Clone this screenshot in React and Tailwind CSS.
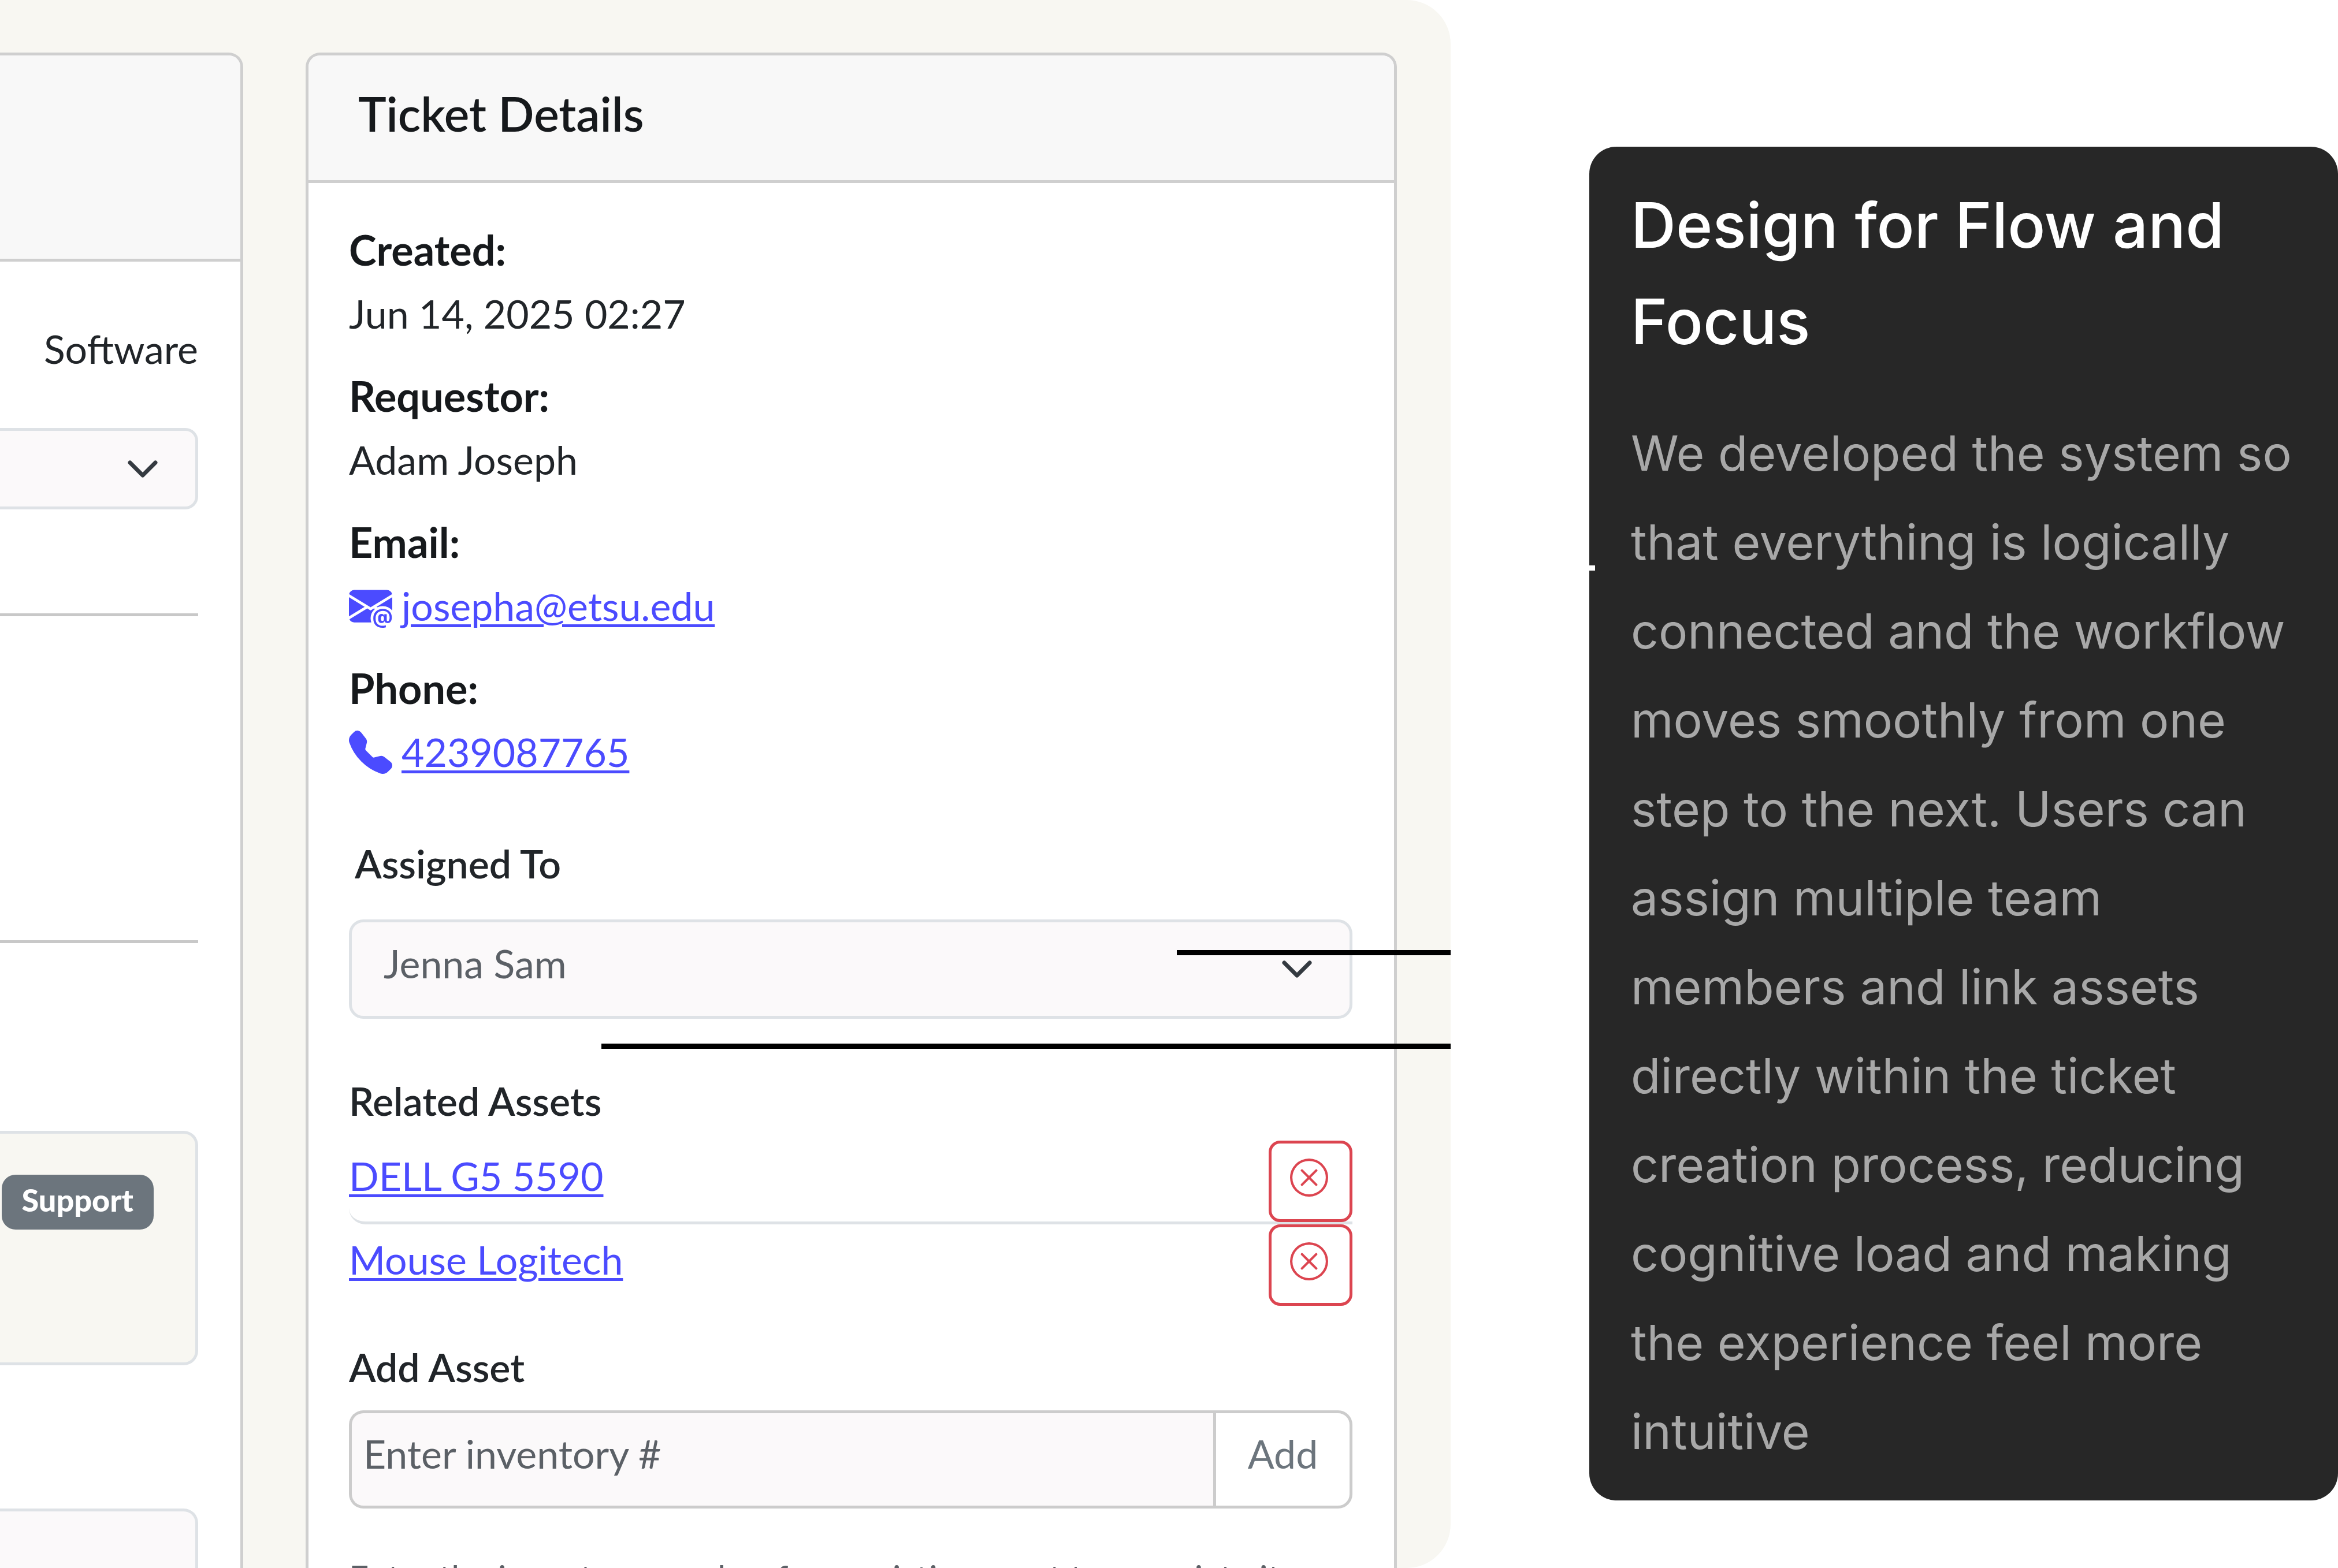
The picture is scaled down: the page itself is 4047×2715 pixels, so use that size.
import { BsEnvelopeAtFill, BsTelephoneFill, BsXCircle } from 'react-icons/bs';

const assets = ['DELL G5 5590', 'Mouse Logitech'];

function Chevron() {
  return (
    <svg
      viewBox="0 0 52 32"
      aria-hidden="true"
      className="pointer-events-none absolute right-[70px] top-1/2 h-8 w-[52px] -translate-y-1/2 fill-none stroke-[#343a40] stroke-[7]"
      strokeLinecap="round"
      strokeLinejoin="round"
    >
      <path d="M4 5 L26 27 L48 5" />
    </svg>
  );
}

function Detail({ label, children }) {
  return (
    <div className="mb-[31px]">
      <dt className="text-[72px] font-bold leading-[112px] text-[#16191c]">{label}</dt>
      <dd className="leading-[110px]">{children}</dd>
    </div>
  );
}

function IconLink({ href, icon: Icon, children }) {
  return (
    <a href={href} className="flex w-fit items-center gap-4 text-[#4b4bff]">
      <Icon className="size-[75px] shrink-0" aria-hidden="true" />
      <span className="underline decoration-[5px] underline-offset-[6px]">{children}</span>
    </a>
  );
}

function TicketCard() {
  return (
    <section className="w-[421px] shrink-0 rounded-tr-[25px] border-[5px] border-b-0 border-l-0 border-[#cfcfcf] bg-white">
      <header className="h-[357px] rounded-tr-[20px] border-b-[5px] border-[#cfcfcf] bg-[#f8f8f8]" />
      <div className="flex flex-col pr-[73px] pt-[96px]">
        <p className="text-right leading-[110px]">Software</p>
        <div className="relative mt-[82px]">
          <select
            aria-label="Category"
            defaultValue=""
            className="block h-[141px] w-full appearance-none rounded-r-[22px] border-[5px] border-l-0 border-[#dee2e6] bg-[#fbf9fa]"
          >
            <option value=""></option>
          </select>
          <Chevron />
        </div>
        <hr className="mt-[180px] border-t-[5px] border-[#c8c8c8]" />
        <hr className="mt-[561px] border-t-[5px] border-[#c8c8c8]" />
        <div className="mt-[325px] flex h-[406px] justify-end rounded-r-[25px] border-[5px] border-l-0 border-[#dee2e6] bg-[#f8f7f2] pr-[72px] pt-[71px]">
          <span className="h-[95px] rounded-[24px] bg-[#6c757d] px-[35px] text-[54px] font-black leading-[88px] text-white">
            Support
          </span>
        </div>
        <div className="mt-[248px] h-[300px] rounded-r-[25px] border-[5px] border-l-0 border-[#dee2e6] bg-[#fbf9fa]" />
      </div>
    </section>
  );
}

function DetailsCard() {
  return (
    <section className="min-w-0 flex-1 rounded-t-[25px] border-[5px] border-b-0 border-[#cfcfcf] bg-white">
      <header className="rounded-t-[20px] border-b-[5px] border-[#cfcfcf] bg-[#f8f8f8] pb-[66px] pl-[86px] pt-[50px]">
        <h2 className="text-[82px] font-semibold leading-[100px] text-[#16191c]">Ticket Details</h2>
      </header>
      <div className="pl-[70px] pr-[72px] pt-[59px]">
        <dl>
          <Detail label="Created:">Jun 14, 2025 02:27</Detail>
          <Detail label="Requestor:">Adam Joseph</Detail>
          <Detail label="Email:">
            <IconLink href="mailto:josepha@etsu.edu" icon={BsEnvelopeAtFill}>josepha@etsu.edu</IconLink>
          </Detail>
          <Detail label="Phone:">
            <IconLink href="tel:4239087765" icon={BsTelephoneFill}>4239087765</IconLink>
          </Detail>
        </dl>

        <label htmlFor="assignee" className="mt-[83px] block pl-[10px] font-semibold leading-[110px]">
          Assigned To
        </label>
        <div className="relative mt-[42px]">
          <select
            id="assignee"
            defaultValue="Jenna Sam"
            className="block h-[172px] w-full appearance-none rounded-[25px] border-[5px] border-[#dee2e6] bg-[#fbf9fa] pb-5 pl-[55px] text-[#5b6066]"
          >
            <option>Jenna Sam</option>
          </select>
          <Chevron />
        </div>

        <h3 className="mt-[87px] font-semibold leading-[110px]">Related Assets</h3>
        <ul className="mt-[14px]">
          {assets.map((name) => (
            <li
              key={name}
              className="flex h-[145px] items-start justify-between rounded-bl-[28px] border-[#dee2e6] not-last:border-b-[5px] last:h-[141px]"
            >
              <a
                href="#asset"
                className="pt-[6px] leading-[110px] text-[#4b4bff] underline decoration-[5px] underline-offset-[6px]"
              >
                {name}
              </a>
              <button
                type="button"
                aria-label={`Remove ${name}`}
                className="flex h-[141px] w-[145px] items-center justify-center rounded-[20px] border-[5px] border-[#dc4550] bg-white pb-[14px] pr-[6px] text-[#dc4550]"
              >
                <BsXCircle className="size-[66px]" />
              </button>
            </li>
          ))}
        </ul>

        <label htmlFor="inventory" className="mt-[51px] block font-semibold leading-[110px]">
          Add Asset
        </label>
        <div className="mt-[20px] flex h-[170px]">
          <input
            id="inventory"
            type="text"
            placeholder="Enter inventory #"
            className="min-w-0 flex-1 rounded-l-[25px] border-[5px] border-r-0 border-[#cccccc] bg-[#fbf9fa] pb-5 pl-5 placeholder:text-[#5b6066]"
          />
          <button
            type="button"
            className="w-[241px] rounded-r-[25px] border-[5px] border-[#cccccc] bg-white pb-5 text-[#6c757d]"
          >
            Add
          </button>
        </div>
        <p className="mt-[74px] whitespace-nowrap text-[60px] leading-[90px] text-[#5b6066]">
          Enter the inventory number from existing asset to associate it
        </p>
      </div>
    </section>
  );
}

export default function App() {
  return (
    <main className="grid h-screen grid-cols-[minmax(0,2511fr)_minmax(0,1536fr)] items-start overflow-hidden bg-white">
      <div className="relative flex h-full gap-[108px] overflow-hidden rounded-r-[76px] bg-[#f8f7f2] pr-[93px] pt-[91px] font-['Lato',sans-serif] text-[68px] text-[#212529]">
        <TicketCard />
        <DetailsCard />
        <div className="absolute right-0 top-[1645px] h-[9px] w-[474px] bg-black" />
        <div className="absolute right-0 top-[1807px] h-[9px] w-[1470px] bg-black" />
      </div>
      <div className="pl-60 pt-[254px]">
        <article className="relative rounded-[47px] bg-[#272727] px-[72px] pb-[42px] pt-[52px] font-['Inter',sans-serif]">
          <span className="absolute left-0 top-[725px] h-[9px] w-[10px] bg-white" />
          <h1 className="text-[108px] font-medium leading-[167px] text-white">Design for Flow and Focus</h1>
          <p className="mt-[68px] text-[84px] leading-[154px] text-[#a8a8a8]">
            We developed the system so that everything is logically connected and the workflow moves
            smoothly from one step to the next. Users can assign multiple team members and link assets
            directly within the ticket creation process, reducing cognitive load and making the
            experience feel more intuitive
          </p>
        </article>
      </div>
    </main>
  );
}
